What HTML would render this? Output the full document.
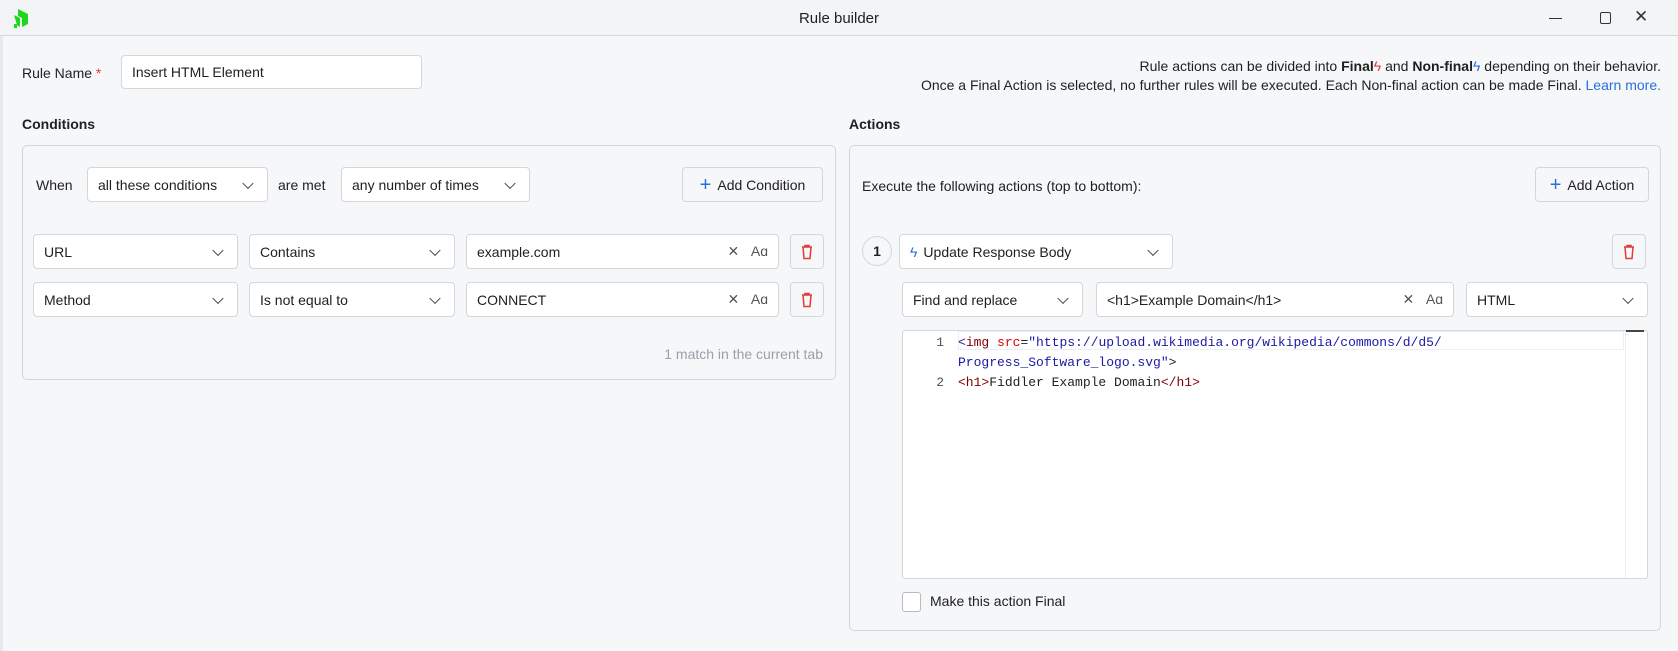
<!DOCTYPE html>
<html><head><meta charset="utf-8"><style>
*{box-sizing:border-box;margin:0;padding:0}
body{width:1678px;height:651px;background:#f6f7f9;font-family:"Liberation Sans",sans-serif;font-size:14px;color:#1f1f1f;position:relative;overflow:hidden}
.a{position:absolute}
.tb{left:0;top:0;width:1678px;height:36px;background:#f3f4f6;border-bottom:1px solid #d6d8dc}
.box{position:absolute;background:#fff;border:1px solid #d3d6db;border-radius:4px;display:flex;align-items:center;padding:0 10px;white-space:nowrap}
.sel::after{content:"";position:absolute;right:15px;top:50%;width:7px;height:7px;border-right:1.3px solid #444;border-bottom:1.3px solid #444;transform:translateY(-70%) rotate(45deg)}
.panel{position:absolute;border:1px solid #d3d6db;border-radius:5px;background:#f6f7f9}
.btn{position:absolute;background:#f6f7f9;border:1px solid #d3d6db;border-radius:4px;display:flex;align-items:center;justify-content:center}
.plus{color:#2a6fe0;font-size:20px;margin-right:6px;line-height:1}
.ic{position:absolute;right:10px;color:#555;font-size:14px}
.code{font-family:"Liberation Mono",monospace;font-size:13px}
</style></head><body>
<div class="a tb"></div>
<svg class="a" style="left:12px;top:7px" width="20" height="22" viewBox="0 0 20 22"><path d="M6 2 L16 7 L16 17 L10 20 L10 11 L6 9Z" fill="#1ed61e"/><path d="M2 8 L8 11 L8 20 L5 18Z" fill="#1ed61e"/><rect x="2" y="17" width="3" height="4" fill="#1ed61e"/></svg>
<div class="a" style="left:0;width:1678px;top:10px;text-align:center;font-size:15px">Rule builder</div>
<div class="a" style="left:1549px;top:18px;width:13px;border-top:1px solid #333"></div>
<div class="a" style="left:1600px;top:12px;width:11px;height:12px;border:1px solid #333;border-radius:2px"></div>
<div class="a" style="left:1634px;top:7px;font-size:17px;color:#333">✕</div>
<div class="a" style="left:0;top:36px;width:3px;height:615px;background:#e8e9ec"></div>

<div class="a" style="left:22px;top:65px">Rule Name <span style="color:#e53935">*</span></div>
<div class="box" style="left:121px;top:55px;width:301px;height:34px">Insert HTML Element</div>
<div class="a" style="right:17px;top:57px;text-align:right;line-height:19px">Rule actions can be divided into <b>Final</b><span style="color:#e53935">ϟ</span> and <b>Non-final</b><span style="color:#2a6fe0">ϟ</span> depending on their behavior.<br>Once a Final Action is selected, no further rules will be executed. Each Non-final action can be made Final. <span style="color:#2a6fe0">Learn more.</span></div>

<div class="a" style="left:22px;top:116px;font-weight:bold">Conditions</div>
<div class="a" style="left:849px;top:116px;font-weight:bold">Actions</div>

<div class="panel" style="left:22px;top:145px;width:814px;height:235px"></div>
<div class="a" style="left:36px;top:177px">When</div>
<div class="box sel" style="left:87px;top:167px;width:181px;height:35px">all these conditions</div>
<div class="a" style="left:278px;top:177px">are met</div>
<div class="box sel" style="left:341px;top:167px;width:189px;height:35px">any number of times</div>
<div class="btn" style="left:682px;top:167px;width:141px;height:35px"><span class="plus">+</span>Add Condition</div>

<div class="box sel" style="left:33px;top:234px;width:205px;height:35px">URL</div>
<div class="box sel" style="left:249px;top:234px;width:206px;height:35px">Contains</div>
<div class="box" style="left:466px;top:234px;width:313px;height:35px">example.com<span class="ic">✕&nbsp;&nbsp;&nbsp;Aɑ</span></div>
<div class="btn" style="left:790px;top:234px;width:34px;height:35px"><svg width="12" height="16" viewBox="0 0 12 16"><path d="M1 3h10M4 3V1.5h4V3M2 3l1 11.5h6L10 3" fill="none" stroke="#e53935" stroke-width="1.5"/></svg></div>
<div class="box sel" style="left:33px;top:282px;width:205px;height:35px">Method</div>
<div class="box sel" style="left:249px;top:282px;width:206px;height:35px">Is not equal to</div>
<div class="box" style="left:466px;top:282px;width:313px;height:35px">CONNECT<span class="ic">✕&nbsp;&nbsp;&nbsp;Aɑ</span></div>
<div class="btn" style="left:790px;top:282px;width:34px;height:35px"><svg width="12" height="16" viewBox="0 0 12 16"><path d="M1 3h10M4 3V1.5h4V3M2 3l1 11.5h6L10 3" fill="none" stroke="#e53935" stroke-width="1.5"/></svg></div>
<div class="a" style="right:855px;top:346px;color:#9aa0a8">1 match in the current tab</div>

<div class="panel" style="left:849px;top:145px;width:812px;height:486px"></div>
<div class="a" style="left:862px;top:178px">Execute the following actions (top to bottom):</div>
<div class="btn" style="left:1535px;top:167px;width:114px;height:35px"><span class="plus">+</span>Add Action</div>
<div class="a" style="left:862px;top:236px;width:30px;height:30px;border:1px solid #d3d6db;border-radius:50%;background:#f6f7f9;display:flex;align-items:center;justify-content:center;font-weight:bold">1</div>
<div class="box sel" style="left:899px;top:234px;width:274px;height:35px"><span style="color:#2a6fe0;margin-right:6px">ϟ</span>Update Response Body</div>
<div class="btn" style="left:1612px;top:234px;width:34px;height:35px"><svg width="12" height="16" viewBox="0 0 12 16"><path d="M1 3h10M4 3V1.5h4V3M2 3l1 11.5h6L10 3" fill="none" stroke="#e53935" stroke-width="1.5"/></svg></div>
<div class="box sel" style="left:902px;top:282px;width:181px;height:35px">Find and replace</div>
<div class="box" style="left:1096px;top:282px;width:358px;height:35px">&lt;h1&gt;Example Domain&lt;/h1&gt;<span class="ic">✕&nbsp;&nbsp;&nbsp;Aɑ</span></div>
<div class="box sel" style="left:1466px;top:282px;width:182px;height:35px">HTML</div>

<div class="a" style="left:902px;top:330px;width:746px;height:249px;background:#fff;border:1px solid #d3d6db;border-radius:3px"></div>
<div class="a" style="left:958px;top:331px;width:666px;height:19px;border:1px solid #eceef0"></div>
<div class="a" style="left:1625px;top:331px;width:1px;height:247px;background:#eceef0"></div>
<div class="a" style="left:1626px;top:330px;width:18px;height:2px;background:#444"></div>
<div class="a code" style="left:930px;top:333px;line-height:20px;color:#555;text-align:right;width:14px">1<br><br>2</div>
<div class="a code" style="left:958px;top:333px;line-height:20px;white-space:pre"><span style="color:#1a1aa6">&lt;</span><span style="color:#800000">img</span> <span style="color:#e50000">src</span>=<span style="color:#1a1aa6">"https://upload.wikimedia.org/wikipedia/commons/d/d5/</span>
<span style="color:#1a1aa6">Progress_Software_logo.svg"</span>&gt;
<span style="color:#800000">&lt;h1&gt;</span>Fiddler Example Domain<span style="color:#800000">&lt;/h1&gt;</span></div>
<div class="a" style="left:902px;top:592px;width:19px;height:20px;border:1px solid #b8bcc2;border-radius:3px;background:#fff"></div>
<div class="a" style="left:930px;top:593px">Make this action Final</div>
</body></html>
